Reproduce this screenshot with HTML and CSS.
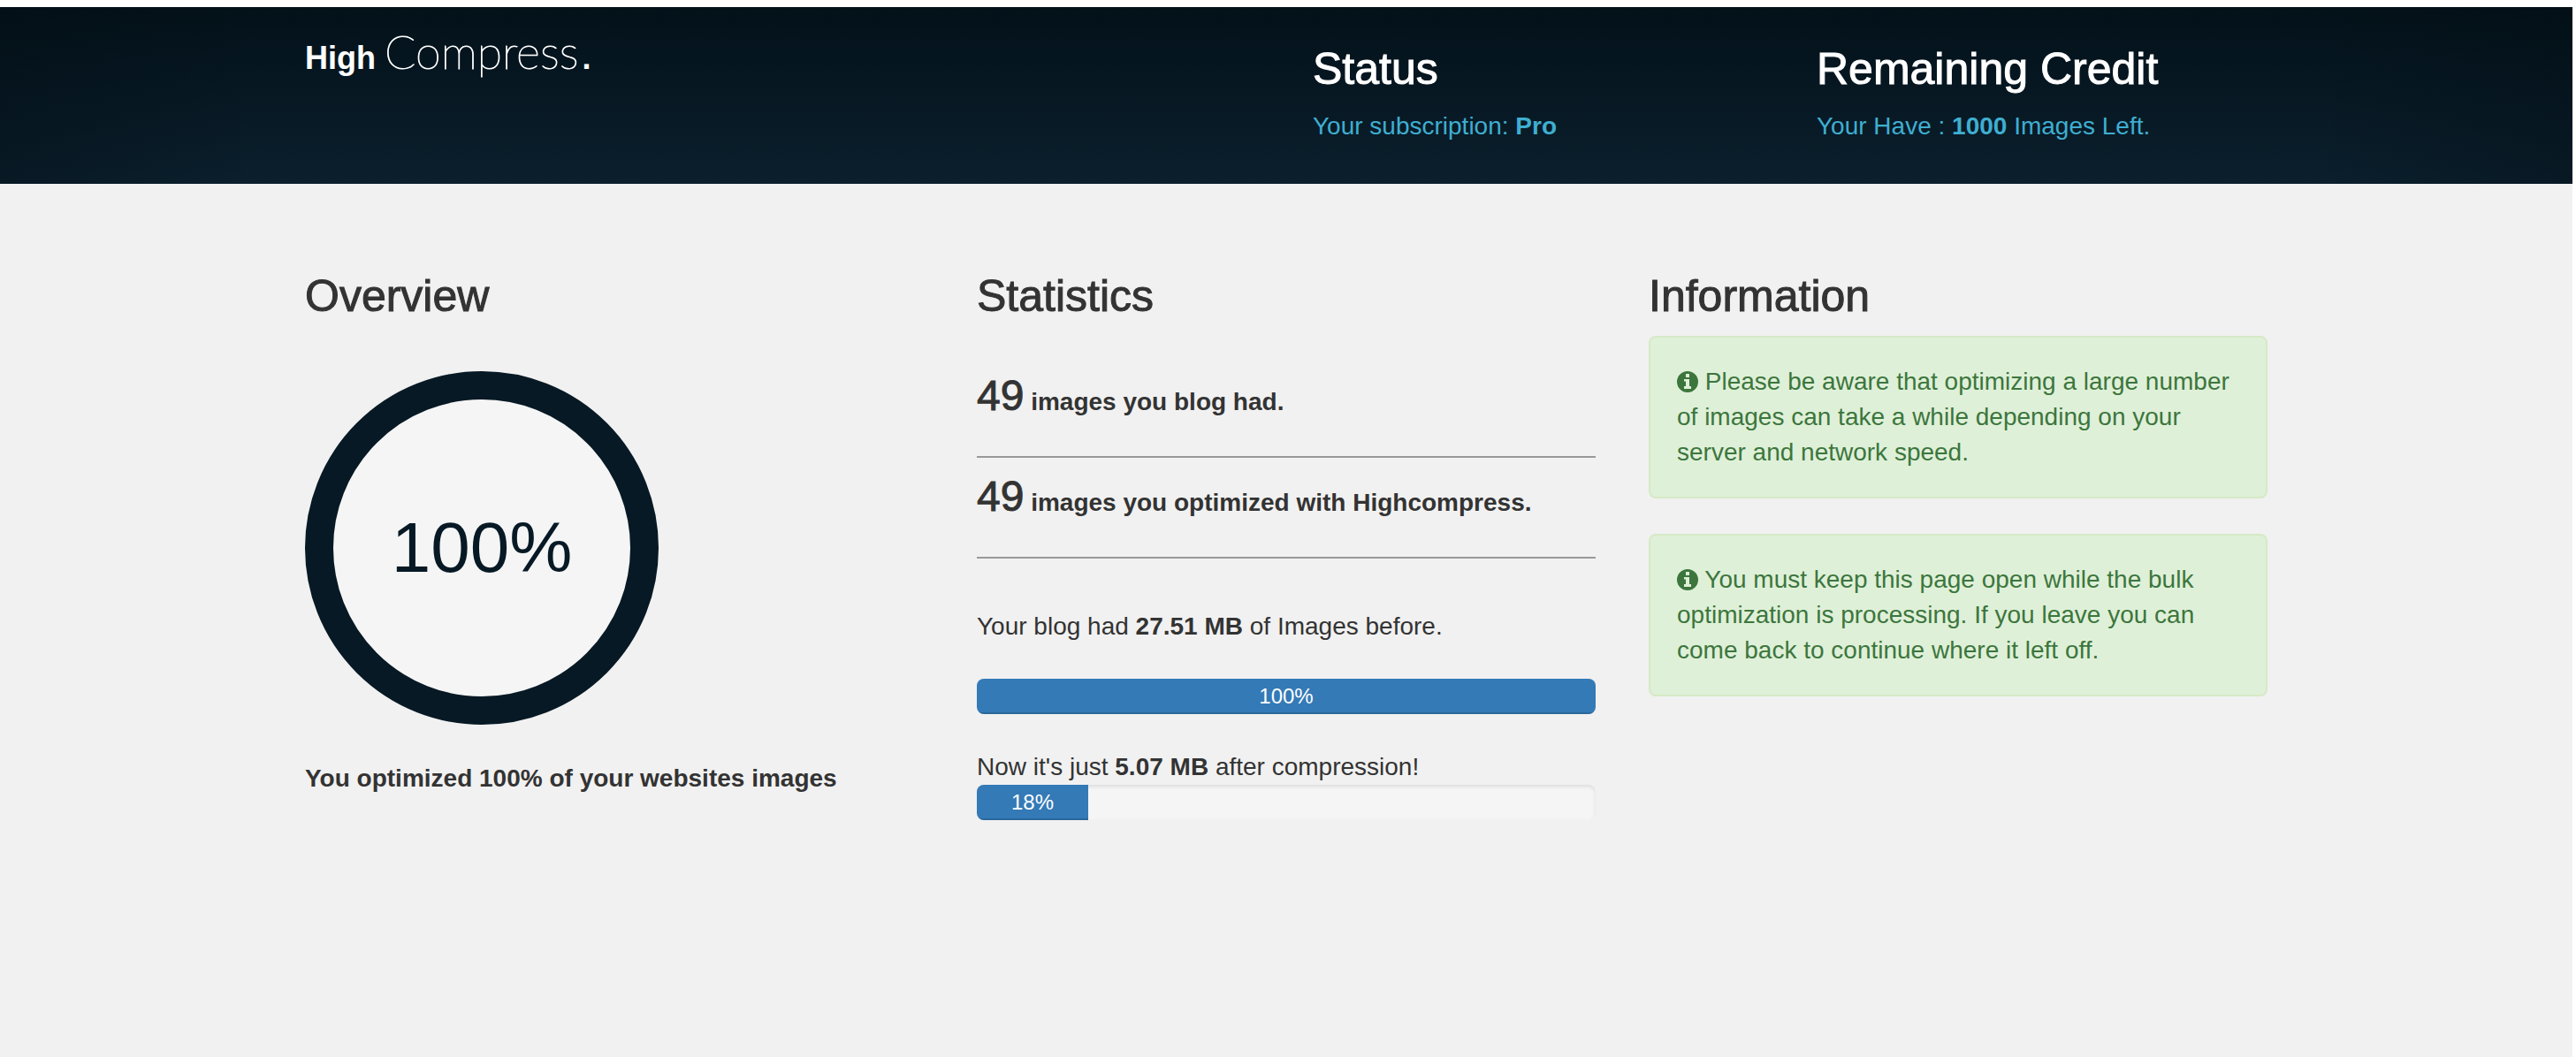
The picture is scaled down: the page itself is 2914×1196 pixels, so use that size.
FILE: index.html
```html
<!DOCTYPE html>
<html lang="en">
<head>
<meta charset="utf-8">
<title>High Compress</title>
<link rel="stylesheet" href="styles.css">
</head>
<body>
<header class="masthead">
  <div class="container masthead-row">
    <div class="logo"><strong>High</strong> <span class="logo-thin">Compress</span><strong class="logo-dot">.</strong></div>
    <div class="masthead-item">
      <h1 class="title">Status</h1>
      <p class="note">Your subscription: <strong>Pro</strong></p>
    </div>
    <div class="masthead-item">
      <h1 class="title">Remaining Credit</h1>
      <p class="note">Your Have : <strong>1000</strong> Images Left.</p>
    </div>
  </div>
</header>
<main class="container columns">
  <section>
    <h2 class="title">Overview</h2>
    <div class="ring">100%</div>
    <p class="caption">You optimized 100% of your websites images</p>
  </section>
  <section>
    <h2 class="title">Statistics</h2>
    <div class="stats">
      <p class="stat"><span class="count">49</span> images you blog had.</p>
      <p class="stat"><span class="count">49</span> images you optimized with Highcompress.</p>
    </div>
    <p class="before">Your blog had <strong>27.51 MB</strong> of Images before.</p>
    <div class="progress"><div class="bar" style="width: 100%">100%</div></div>
    <p class="after">Now it's just <strong>5.07 MB</strong> after compression!</p>
    <div class="progress"><div class="bar" style="width: 18%">18%</div></div>
  </section>
  <section>
    <h2 class="title">Information</h2>
    <div class="alerts">
      <p class="alert"><svg class="icon" viewBox="0 0 24 24" aria-hidden="true"><path fill="currentColor" fill-rule="evenodd" d="M12 0a12 12 0 1 1 0 24a12 12 0 1 1 0-24zM10 3v4h4v-4zM8 9v2.500h2v5.500H8v3h8v-3h-2v-8z"/></svg> Please be aware that optimizing a large number of images can take a while depending on your server and network speed.</p>
      <p class="alert"><svg class="icon" viewBox="0 0 24 24" aria-hidden="true"><path fill="currentColor" fill-rule="evenodd" d="M12 0a12 12 0 1 1 0 24a12 12 0 1 1 0-24zM10 3v4h4v-4zM8 9v2.500h2v5.500H8v3h8v-3h-2v-8z"/></svg> You must keep this page open while the bulk optimization is processing. If you leave you can come back to continue where it left off.</p>
    </div>
  </section>
</main>
</body>
</html>
```
FILE: styles.css
```css
* { box-sizing: border-box; }
body {
  min-height: 100vh;
  margin: 0;
  border-right: 4px solid #fff;
  background: #f1f1f1;
  color: #333;
  font: 28px/40px "Liberation Sans", Arial, sans-serif;
}
h1, h2, p { margin: 0; }

.container {
  width: 100%;
  max-width: 2280px;
  margin: 0 auto;
  padding: 0 30px;
}

.masthead {
  border-top: 8px solid #fff;
  background:
    linear-gradient(90deg, rgba(2, 12, 18, .3), transparent 10%, transparent 90%, rgba(2, 12, 18, .3)),
    linear-gradient(#031119, #0b1f2d);
  color: #fff;
}
.masthead-row {
  display: grid;
  grid-template-columns: 1080px 1fr 1fr;
  column-gap: 60px;
  min-height: 200px;
}
.masthead-item { padding-top: 43px; }
.title {
  font-size: 50px;
  font-weight: 400;
  line-height: 54px;
  -webkit-text-stroke: 1px currentColor;
}
.note { margin-top: 18px; color: #3faed1; }

.logo { padding-top: 25px; font-size: 36px; line-height: 50px; white-space: nowrap; }
.logo-thin {
  font-family: Lato, "Liberation Sans", sans-serif;
  font-size: 52px;
  font-weight: 100;
  -webkit-text-stroke: 1px currentColor;
}
.logo-dot { margin-left: 4px; }

.columns {
  display: grid;
  grid-template-columns: repeat(3, 1fr);
  gap: 60px;
  padding-top: 100px;
  padding-bottom: 60px;
}
.ring {
  display: flex;
  align-items: center;
  justify-content: center;
  width: 400px;
  height: 400px;
  margin-top: 58px;
  border: 32px solid #071924;
  border-radius: 50%;
  background: #f5f5f5;
  color: #071924;
  font-size: 80px;
}
.caption { margin-top: 41px; font-weight: 700; }

.stats { padding-top: 59px; }
.stat {
  height: 114px;
  border-bottom: 2px solid #999;
  font-weight: 700;
  line-height: 54px;
  padding-top: 17px;
}
.stat:first-child { height: 97px; padding-top: 0; }
.count { font-size: 48px; font-weight: 400; -webkit-text-stroke: 1px currentColor; }

.before { margin: 57px 0 39px; }
.after { margin-top: 40px; }
.progress {
  height: 40px;
  overflow: hidden;
  border-radius: 8px;
  background: #f5f5f5;
  box-shadow: inset 0 2px 4px rgba(0, 0, 0, .1);
}
.bar {
  height: 100%;
  background: #337ab7;
  box-shadow: inset 0 -2px 0 rgba(0, 0, 0, .15);
  color: #fff;
  font-size: 24px;
  text-align: center;
}

.alerts { display: grid; gap: 40px; margin-top: 18px; }
.alert {
  padding: 30px;
  border: 2px solid #d6e9c6;
  border-radius: 8px;
  background: #dff0d8;
  color: #3c763d;
}
.icon { width: 24px; height: 24px; vertical-align: -3px; }

@media (max-width: 1800px) {
  .masthead-row, .columns { grid-template-columns: 1fr; }
}
```
